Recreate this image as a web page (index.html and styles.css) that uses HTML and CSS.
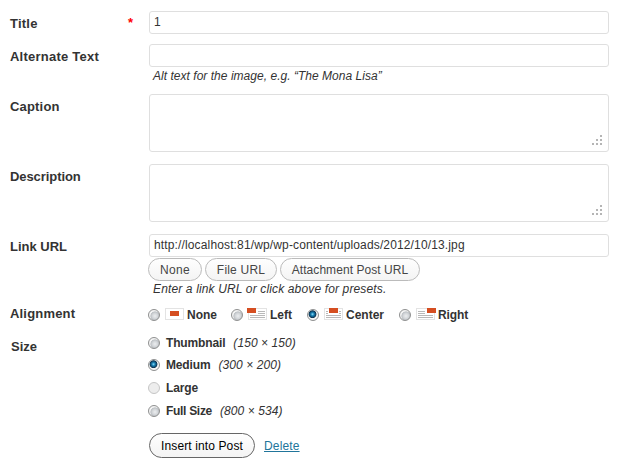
FILE: index.html
```html
<!DOCTYPE html>
<html lang="en">
<head>
<meta charset="utf-8">
<title>Insert image</title>
<link rel="stylesheet" href="styles.css">
</head>
<body>
<form class="form">
  <div class="row title-row">
    <div class="label"><span class="wide">Title</span><span class="required">*</span></div>
    <div class="field"><div class="input">1</div></div>
  </div>
  <div class="row alt-row">
    <div class="label"><span class="wide">Alternate Text</span></div>
    <div class="field"><div class="input"></div><p class="note alt-note">Alt text for the image, e.g. “The Mona Lisa”</p></div>
  </div>
  <div class="row area-row">
    <div class="label"><span class="mid">Caption</span></div>
    <div class="field"><div class="area"><svg class="grip" width="10" height="10" fill="#b5b5b5" shape-rendering="crispEdges"><path d="M8 0h2v2h-2zM4 4h2v2h-2zM8 4h2v2h-2zM0 8h2v2h-2zM4 8h2v2h-2zM8 8h2v2h-2z"/></svg></div></div>
  </div>
  <div class="row area-row">
    <div class="label"><span class="narrow">Description</span></div>
    <div class="field"><div class="area"><svg class="grip" width="10" height="10" fill="#b5b5b5" shape-rendering="crispEdges"><path d="M8 0h2v2h-2zM4 4h2v2h-2zM8 4h2v2h-2zM0 8h2v2h-2zM4 8h2v2h-2zM8 8h2v2h-2z"/></svg></div></div>
  </div>
  <div class="row link-row">
    <div class="label">Link URL</div>
    <div class="field">
      <div class="input url">http://localhost:81/wp/wp-content/uploads/2012/10/13.jpg</div>
      <div class="presets"><span class="button b-none">None</span><span class="button b-file">File URL</span><span class="button b-post">Attachment Post URL</span></div>
      <p class="note link-note">Enter a link URL or click above for presets.</p>
    </div>
  </div>
  <div class="row align-row">
    <div class="label"><span class="mid">Alignment</span></div>
    <div class="field aligns">
      <div class="align a-none"><i class="radio"></i><svg width="22" height="14" shape-rendering="crispEdges"><rect x="1.5" y="1.5" width="18" height="11" fill="#fff" stroke="#e3e3e3"/><path d="M6 4h9v5H6z" fill="#d54e21"/></svg><b>None</b></div>
      <div class="align a-left"><i class="radio"></i><svg width="22" height="14" shape-rendering="crispEdges"><rect x="1.5" y="1.5" width="18" height="11" fill="#fff" stroke="#e3e3e3"/><path d="M11 4.5h7M11 6.5h7M3 8.5h15M3 10.5h15" stroke="#b9b9b9"/><path d="M0 1h9v5H0z" fill="#d54e21"/></svg><b>Left</b></div>
      <div class="align a-center"><i class="radio on"></i><svg width="22" height="14" shape-rendering="crispEdges"><rect x="1.5" y="1.5" width="18" height="11" fill="#fff" stroke="#e3e3e3"/><path d="M3 4.5h2M16 4.5h2M3 6.5h2M16 6.5h2M3 8.5h15M3 10.5h15" stroke="#b9b9b9"/><path d="M6 1h9v5H6z" fill="#d54e21"/></svg><b>Center</b></div>
      <div class="align a-right"><i class="radio"></i><svg width="22" height="14" shape-rendering="crispEdges"><rect x="1.5" y="1.5" width="18" height="11" fill="#fff" stroke="#e3e3e3"/><path d="M3 4.5h7M3 6.5h7M3 8.5h15M3 10.5h15" stroke="#b9b9b9"/><path d="M12 1h9v5h-9z" fill="#d54e21"/></svg><b>Right</b></div>
    </div>
  </div>
  <div class="row size-row">
    <div class="label size-label">Size</div>
    <div class="field sizes">
      <div class="size"><i class="radio"></i><b>Thumbnail</b><em>(150 × 150)</em></div>
      <div class="size"><i class="radio on"></i><b>Medium</b><em>(300 × 200)</em></div>
      <div class="size tall"><i class="radio off"></i><b>Large</b></div>
      <div class="size"><i class="radio"></i><b class="full">Full Size</b><em>(800 × 534)</em></div>
    </div>
  </div>
  <div class="actions"><span class="button insert">Insert into Post</span><a class="delete">Delete</a></div>
</form>
</body>
</html>
```
FILE: styles.css
```css
* { box-sizing: border-box; }
body {
  margin: 0;
  background: #fff;
  color: #333;
  font: 12px/16px "Liberation Sans", Arial, sans-serif;
}
.form { padding: 11px 9px 0 10px; }
.row { display: flex; align-items: flex-start; }
.label {
  display: flex;
  justify-content: space-between;
  flex: none;
  width: 139px;
  padding: 5px 16px 0 0;
  font-size: 13px;
  font-weight: bold;
}
.wide { letter-spacing: 0.23px; }
.mid { letter-spacing: 0.18px; }
.narrow { letter-spacing: -0.08px; }
.required { margin-top: -1px; color: #f00; }
.field { flex: 1; }
.input {
  height: 23px;
  padding: 2px 4px;
  border: 1px solid #dfdfdf;
  border-radius: 3px;
  line-height: 17px;
  white-space: nowrap;
}
.url { letter-spacing: 0.14px; }
.note { margin: 1px 0 0 4px; font-style: italic; white-space: nowrap; }
.alt-note { letter-spacing: 0.03px; }
.area {
  display: flex;
  align-items: flex-end;
  justify-content: flex-end;
  height: 58px;
  padding: 6px;
  border: 1px solid #dfdfdf;
  border-radius: 3px;
}
.title-row { height: 33px; }
.alt-row { height: 50px; }
.area-row { height: 70px; }
.link-row { height: 67px; }
.presets { display: flex; gap: 3px; margin: 1px 0 0 -1px; }
.link-note { margin-top: 0; letter-spacing: 0.14px; }
.button {
  height: 23px;
  border: 1px solid #bbb;
  border-radius: 12px;
  background: linear-gradient(#fefefe, #f4f4f4);
  color: #464646;
  font-size: 12px;
  line-height: 22px;
  text-align: center;
  white-space: nowrap;
}
.b-none { width: 54px; letter-spacing: 0.3px; }
.b-file { width: 72px; letter-spacing: 0.2px; }
.b-post { width: 140px; letter-spacing: 0.06px; }
.align-row { height: 33px; }
.aligns { display: flex; padding-top: 6px; }
.align { display: flex; align-items: center; height: 16px; }
.align svg { margin: 0 0 2px 4px; }
.a-none { width: 83px; }
.a-left { width: 76px; }
.a-center { width: 92px; }
.align b { margin-left: 1px; }
.a-right b { letter-spacing: -0.1px; }
.radio {
  flex: none;
  width: 12px;
  height: 12px;
  margin-left: -1px;
  border: 1px solid #8e8f8f;
  border-radius: 50%;
  background: radial-gradient(circle at 60% 60%, #eceef0 0, #d3d6d9 32%, #bcc0c4 50%, #f4f4f4 58%);
}
.radio.on { background: radial-gradient(circle at 45% 42%, #8edcf7 0, #1681b5 20%, #0d3350 44%, #f4f4f4 54%); }
.radio.off { border-color: #c6c6c6; background: #ededed; }
.size-row { height: 90px; }
.size-label { padding-left: 1px; }
.sizes { margin-top: -2px; }
.size { display: flex; align-items: center; height: 22px; }
.size.tall { height: 24px; }
.size b { margin-left: 6px; letter-spacing: -0.15px; }
.size .full { letter-spacing: -0.3px; }
.size em { margin-left: 8px; letter-spacing: 0.08px; }
.actions { display: flex; align-items: center; margin: 9px 0 0 139px; }
.insert {
  width: 106px;
  height: 25px;
  border-color: #666;
  border-radius: 13px;
  color: #000;
  letter-spacing: 0.12px;
  line-height: 24px;
}
.delete { margin-left: 9px; color: #21759b; letter-spacing: 0.15px; text-decoration: underline; }
```
